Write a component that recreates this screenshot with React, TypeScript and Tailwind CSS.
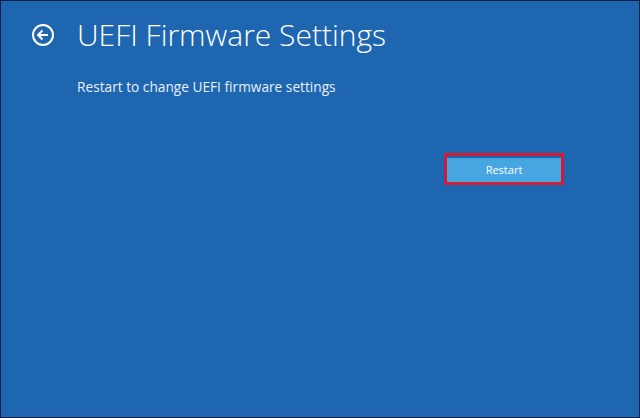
export default function App() {
  return (
    <div
      className="w-[640px] h-[418px] border border-[#0b1f4d] bg-[#1f66b1] text-white overflow-hidden"
      style={{ fontFamily: '"Open Sans", "Segoe UI", Arial, sans-serif' }}
    >
      <div className="flex items-center pl-[30px] pt-[14px]">
        <svg width="24" height="24" viewBox="0 0 24 24" fill="none" stroke="white" strokeWidth="2">
          <circle cx="12" cy="12" r="10" />
          <path d="M17 12H7.5M11.5 7.5L7 12l4.5 4.5" />
        </svg>
        <h1 className="ml-[22px] text-[30px] font-light leading-[40px] tracking-[0px]">UEFI Firmware Settings</h1>
      </div>
      <p className="pl-[76px] mt-[22px] text-[13.7px] font-normal leading-[20px] text-[#e8f0fa]">
        Restart to change UEFI firmware settings
      </p>
      <div className="flex pl-[443px] mt-[56px]">
        <div className="border-[3px] border-[#d01c34] p-0">
          <button className="w-[114px] h-[24px] bg-[#47a6e2] text-[11px] text-white leading-none">Restart</button>
        </div>
      </div>
    </div>
  );
}
